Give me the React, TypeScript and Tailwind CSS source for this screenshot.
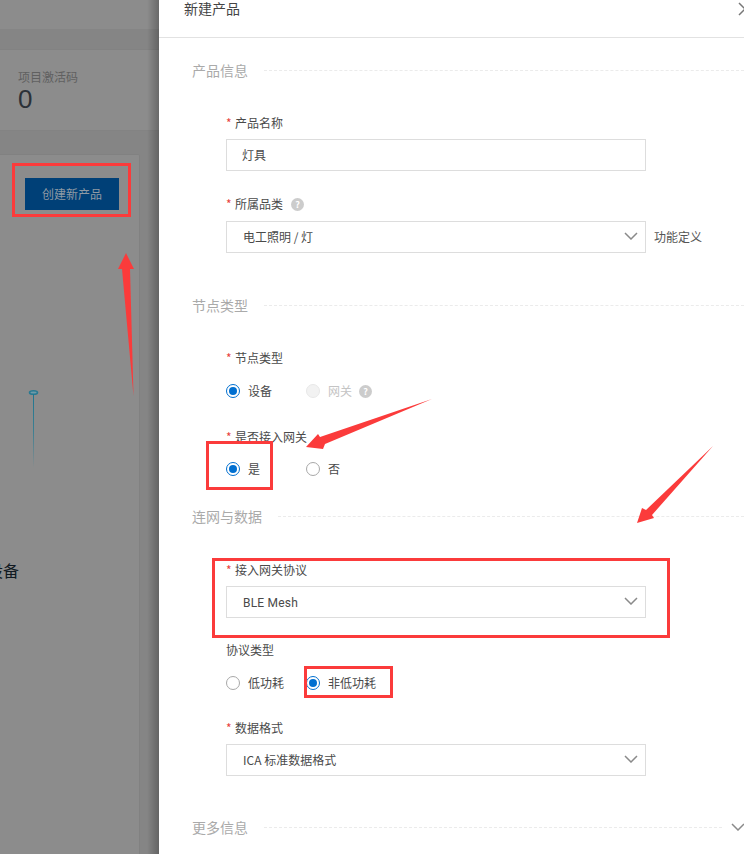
import React from "react";

const Chevron = ({ className = "" }: { className?: string }) => (
  <svg width="14" height="8" viewBox="0 0 14 8" fill="none" className={className}>
    <path d="M1 1l6 6 6-6" stroke="#8a8a8a" strokeWidth="1.5" />
  </svg>
);

const Section = ({ title, className = "", chevron = false }: { title: string; className?: string; chevron?: boolean }) => (
  <div className={`flex h-5 items-center ${className}`}>
    <span className="ml-[33px] text-[14px] leading-5 text-[#aaaaaa]">{title}</span>
    <div className={`ml-4 flex-1 border-t border-dashed border-[#ebebeb] ${chevron ? "mr-[22px]" : ""}`} />
    {chevron && <Chevron className="absolute right-[-1px]" />}
  </div>
);

const Help = ({ className = "" }: { className?: string }) => (
  <span className={`flex h-[13px] w-[13px] items-center justify-center rounded-full bg-[#cccccc] text-[9px] font-bold leading-none text-white ${className}`}>?</span>
);

const Label = ({ text, className = "", required = true, help = false }: { text: string; className?: string; required?: boolean; help?: boolean }) => (
  <div className={`ml-[67px] flex h-5 items-center text-[12px] leading-5 text-[#4a4a4a] ${className}`}>
    {required && <span className="mr-[4px] w-[5px] text-[#e8423c]">*</span>}
    <span>{text}</span>
    {help && <Help className="ml-2" />}
  </div>
);

const Select = ({ value, className = "", after, valueClass = "" }: { value: string; className?: string; after?: string; valueClass?: string }) => (
  <div className={`ml-[67px] flex items-center ${className}`}>
    <div className="flex h-8 w-[420px] items-center justify-between border border-[#dddddd] pl-4 pr-[7px] text-[12px] text-[#4a4a4a]">
      <span className={valueClass}>{value}</span>
      <Chevron className="mt-[-2px]" />
    </div>
    {after && <span className="ml-2 text-[12px] text-[#555555]">{after}</span>}
  </div>
);

const Radio = ({ label, checked = false, disabled = false, className = "" }: { label: string; checked?: boolean; disabled?: boolean; className?: string }) => (
  <div className={`flex h-5 items-center ${className}`}>
    <span
      className={`flex h-[14px] w-[14px] items-center justify-center rounded-full border ${
        checked ? "border-[#006fd0]" : disabled ? "border-[#e8e8e8] bg-[#f2f2f2]" : "border-[#a8a8a8]"
      }`}
    >
      {checked && <span className="h-2 w-2 rounded-full bg-[#006fd0]" />}
    </span>
    <span className={`ml-2 text-[12px] leading-5 ${disabled ? "text-[#c4c4c4]" : "text-[#4a4a4a]"}`}>{label}</span>
  </div>
);

export default function App() {
  return (
    <div
      className="relative flex h-[854px] w-[744px] overflow-hidden bg-white"
      style={{ fontFamily: '"Noto Sans CJK SC", "Liberation Sans", sans-serif' }}
    >
      {/* dimmed page */}
      <div className="flex h-full w-[159px] shrink-0 flex-col overflow-hidden bg-[#8b8b8b]">
        <div className="h-[29px] shrink-0 bg-[#8c8c8c]" />
        <div className="h-[21px] shrink-0 border-b border-[#828282] bg-[#858585]" />
        <div className="h-[81px] shrink-0 border-b border-[#838383] bg-[#8c8c8c] pl-[18px] pt-[18px]">
          <div className="text-[12px] leading-[18px] text-[#606060]">项目激活码</div>
          <div className="text-[26px] leading-[26px] text-[#2b3138]" style={{ fontFamily: '"Liberation Sans", sans-serif' }}>0</div>
        </div>
        <div className="h-[23px] shrink-0 bg-[#858585]" />
        <div className="flex flex-1 flex-row">
          <div className="w-[140px] shrink-0 rounded-tr-[2px] border-r border-t border-[#818181] bg-[#8c8c8c] pt-[23px]">
            <div className="ml-[25px] flex h-8 w-[94px] items-center justify-center bg-[#004077] text-[12px] text-[#8f9aa4]">创建新产品</div>
            <svg width="20" height="82" viewBox="0 0 20 82" className="ml-[23px] mt-[178px] block">
              <defs>
                <linearGradient id="stem" x1="0" y1="0" x2="0" y2="1">
                  <stop offset="0" stopColor="#1f7690" />
                  <stop offset="0.5" stopColor="#3d7f92" />
                  <stop offset="1" stopColor="#3d7f92" stopOpacity="0" />
                </linearGradient>
              </defs>
              <ellipse cx="10.5" cy="4.5" rx="4" ry="1.8" fill="#6f9aa8" stroke="#2a7a92" strokeWidth="1.6" />
              <rect x="10" y="6" width="1" height="74" fill="url(#stem)" />
            </svg>
            <div className="ml-[-13px] mt-[88px] text-[16px] leading-6 text-[#111a22]">设备</div>
          </div>
          <div className="flex-1 bg-[#858585]" />
        </div>
      </div>

      {/* drawer */}
      <div className="relative z-10 h-full flex-1 overflow-hidden bg-white">
        <div className="flex h-[38px] items-start border-b border-[#e2e2e2] pl-[25px]">
          <span className="mt-[-2px] text-[14px] leading-5 text-[#444444]">新建产品</span>
          <svg width="10" height="14" viewBox="0 0 10 14" className="absolute left-[579px] top-[2px]">
            <path d="M1 1l6 6-6 6" fill="none" stroke="#777777" strokeWidth="1.5" />
          </svg>
        </div>

        <Section title="产品信息" className="mt-[22px]" />
        <Label text="产品名称" className="mt-[33px]" />
        <div className="ml-[67px] mt-[6px] flex h-8 w-[420px] items-center border border-[#dddddd] pl-[15px] text-[12px] text-[#4a4a4a]">灯具</div>
        <Label text="所属品类" help className="mt-[23px]" />
        <Select value="电工照明 / 灯" after="功能定义" className="mt-[7px]" />

        <Section title="节点类型" className="mt-[42px]" />
        <Label text="节点类型" className="mt-[33px]" />
        <div className="ml-[67px] mt-[13px] flex items-center">
          <Radio label="设备" checked className="w-[80px]" />
          <Radio label="网关" disabled />
          <Help className="ml-[7px]" />
        </div>
        <Label text="是否接入网关" className="mt-[26px]" />
        <div className="ml-[67px] mt-[12px] flex items-center">
          <Radio label="是" checked className="w-[80px]" />
          <Radio label="否" />
        </div>

        <Section title="连网与数据" className="mt-[27px]" />
        <Label text="接入网关协议" className="mt-[34px]" />
        <Select value="BLE Mesh" valueClass="mt-[2px] [font-family:Roboto] tracking-[0.2px]" className="mt-[6px]" />
        <Label text="协议类型" required={false} className="mt-[22px]" />
        <div className="ml-[67px] mt-[13px] flex items-center">
          <Radio label="低功耗" className="w-[80px]" />
          <Radio label="非低功耗" checked />
        </div>
        <Label text="数据格式" className="mt-[25px]" />
        <Select value="ICA 标准数据格式" className="mt-[6px]" />

        <Section title="更多信息" chevron className="relative mt-[41px]" />
      </div>

      {/* shadow cast by the drawer */}
      <div className="absolute left-[147px] top-0 z-10 h-full w-3 bg-gradient-to-r from-transparent to-black/25" />

      {/* red annotations drawn over the screenshot */}
      <div className="absolute left-[12px] top-[163px] z-20 h-[54px] w-[119px] border-[3px] border-[#fb3b3b]" />
      <div className="absolute left-[206px] top-[441px] z-20 h-[49px] w-[67px] border-[3px] border-[#fb3b3b]" />
      <div className="absolute left-[212px] top-[558px] z-20 h-[80px] w-[458px] border-[3px] border-[#fb3b3b]" />
      <div className="absolute left-[304px] top-[666px] z-20 h-[32px] w-[89px] border-[3px] border-[#fb3b3b]" />
      <svg width="744" height="854" className="pointer-events-none absolute left-0 top-0 z-20">
        <polygon points="126,253 134,269 130,269 133.5,396 122,269 118,269" fill="#fb3b3b" />
        <polygon points="432,399 320,437 318,434 306,447 323,449 325,444" fill="#fb3b3b" />
        <polygon points="713,446 652,515 654,518 637,523 642,508 646,510" fill="#fb3b3b" />
      </svg>
    </div>
  );
}
